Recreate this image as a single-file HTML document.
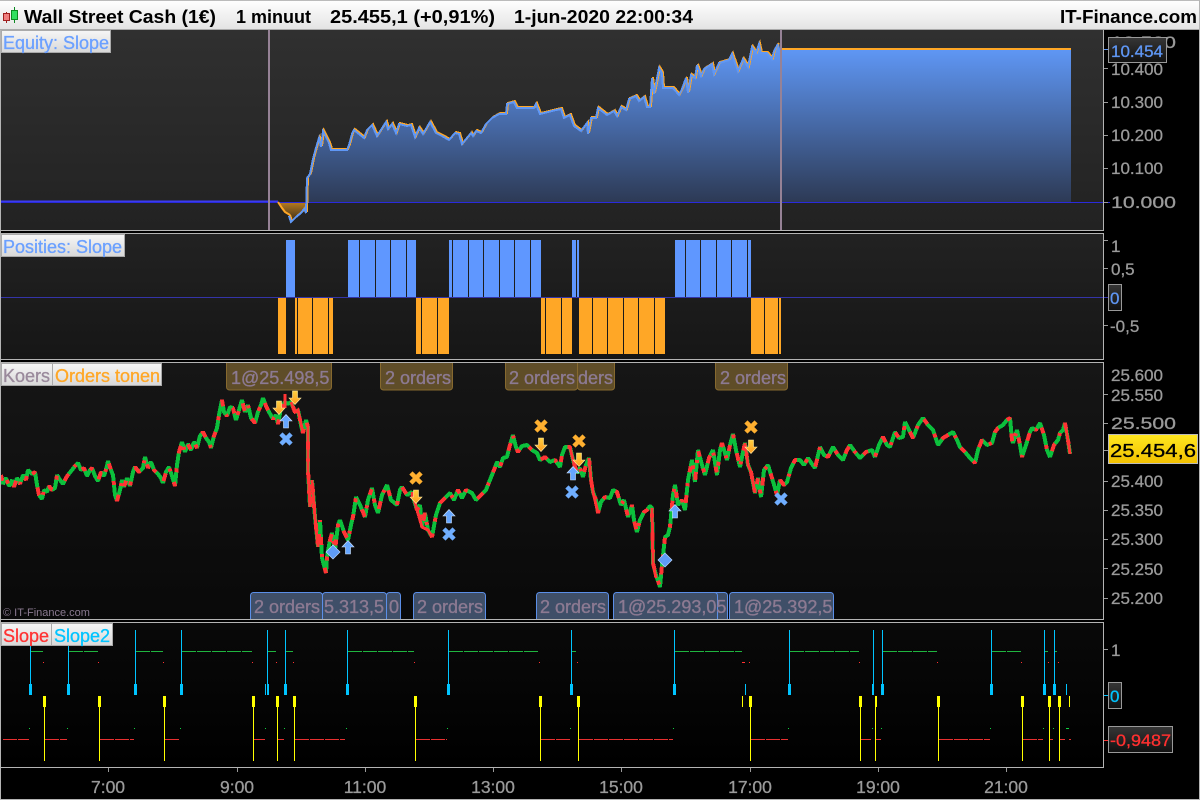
<!DOCTYPE html>
<html><head><meta charset="utf-8"><title>Wall Street Cash</title>
<style>
html,body{margin:0;padding:0;background:#000;width:1200px;height:800px;overflow:hidden}
svg{display:block}
text{font-family:"Liberation Sans",sans-serif;font-size:17px}
.h{font-size:18.5px;font-weight:bold;fill:#000}
.a{fill:#9a9a9a;stroke:#9a9a9a;stroke-width:.3}
.t{font-size:17.5px}
.o{font-size:18px;fill:#8c7a92;stroke:#8c7a92;stroke-width:.35}
.l{font-size:18px;stroke-width:.3}
.v{stroke-width:.3}
</style></head><body>
<svg width="1200" height="800" viewBox="0 0 1200 800" xmlns="http://www.w3.org/2000/svg">
<defs>
<linearGradient id="top" x1="0" y1="0" x2="0" y2="1"><stop offset="0" stop-color="#fff"/><stop offset="1" stop-color="#e4e4e4"/></linearGradient>
<linearGradient id="lab" x1="0" y1="0" x2="0" y2="1"><stop offset="0" stop-color="#f6f6f6"/><stop offset="1" stop-color="#d8d8d8"/></linearGradient>
<linearGradient id="p1" x1="0" y1="0" x2="0" y2="1"><stop offset="0" stop-color="#303030"/><stop offset="1" stop-color="#222"/></linearGradient>
<linearGradient id="p2" x1="0" y1="0" x2="0" y2="1"><stop offset="0" stop-color="#222"/><stop offset="1" stop-color="#161616"/></linearGradient>
<linearGradient id="p3" x1="0" y1="0" x2="0" y2="1"><stop offset="0" stop-color="#161616"/><stop offset="1" stop-color="#090909"/></linearGradient>
<linearGradient id="p4" x1="0" y1="0" x2="0" y2="1"><stop offset="0" stop-color="#090909"/><stop offset="1" stop-color="#000"/></linearGradient>
<linearGradient id="eq" gradientUnits="userSpaceOnUse" x1="0" y1="49" x2="0" y2="202"><stop offset="0" stop-color="#5f97f5"/><stop offset="1" stop-color="#2d3a55"/></linearGradient>
<linearGradient id="eqo" gradientUnits="userSpaceOnUse" x1="0" y1="202" x2="0" y2="221"><stop offset="0" stop-color="#b87c20"/><stop offset="1" stop-color="#3a2c18"/></linearGradient>
<linearGradient id="box" x1="0" y1="0" x2="0" y2="1"><stop offset="0" stop-color="#363636"/><stop offset="1" stop-color="#111"/></linearGradient>
<linearGradient id="yel" x1="0" y1="0" x2="0" y2="1"><stop offset="0" stop-color="#ffe820"/><stop offset="1" stop-color="#f2c000"/></linearGradient>
<linearGradient id="dn" x1="0" y1="0" x2="0" y2="1"><stop offset="0" stop-color="#ffd040"/><stop offset="1" stop-color="#ff9c20"/></linearGradient>
<path id="da" d="M-2.500-7H2.500V0H6L0 6.500-6 0H-2.500Z" fill="url(#dn)" stroke="#ffe9a0" stroke-width=".6"/>
<path id="ua" d="M-2.500 7H2.500V0H6L0-6.500-6 0H-2.500Z" fill="#66a6ff" stroke="#cfe4ff" stroke-width=".6"/>
<path id="xo" d="M-3.500-3.500L3.500 3.500M3.500-3.500L-3.500 3.500" stroke="#ffb030" stroke-width="4.500" stroke-linecap="square" fill="none"/>
<path id="xb" d="M-3.500-3.500L3.500 3.500M3.500-3.500L-3.500 3.500" stroke="#70aeff" stroke-width="4.500" stroke-linecap="square" fill="none"/>
<path id="dm" d="M0-7L7 0 0 7-7 0Z" fill="#5f9cf7" stroke="#bcd8ff" stroke-width=".7"/>
<polyline id="eline" fill="none" shape-rendering="crispEdges" points="290,215 292,221 297,216 302,212 305,208 307,212 308,177 311,173 314,158 317,147 320,137 322,146 324,130 330,142 332,149 348,149 350,144 353,133 355,129 365,137 368,129 373,124 378,135 387,121 389,128 393,123 397,132 400,123 408,125 412,124 416,136 420,127 424,133 431,121 437,132 443,135 450,139 456,132 460,133 463,143 472,132 474,135 477,130 482,132 487,123 493,117 500,113 507,113 508,103 515,101 518,107 535,107 537,103 541,113 557,109 562,108 565,117 571,114 575,125 582,130 588,122 589,133 592,117 597,117 599,107 608,114 615,110 618,115 622,106 627,109 630,98 637,95 640,100 645,96 648,106 651,106 653,77 655,93 660,67 663,72 664,87 674,87 680,94 683,88 687,77 689,92 692,74 696,77 698,64 702,75 705,68 713,63 715,73 720,62 730,59 733,53 739,70 744,58 749,66 753,46 757,52 760,43 762,52 768,52 773,58 775,50 779,43"/>
<polyline id="pline" fill="none" stroke-linejoin="bevel" shape-rendering="crispEdges" points="1,475 3,484 6,478 9,486 12,480 14,487 17,478 20,484 23,475 26,480 28,470 32,474 35,472 37,485 39,495 42,499 44,490 47,492 49,486 52,490 55,488 57,475 60,480 63,484 66,478 68,475 72,470 75,466 78,463 81,470 84,468 87,476 90,470 92,468 95,476 98,481 101,472 104,476 107,466 108,461 111,470 113,475 115,495 117,501 120,490 122,480 124,487 127,478 130,486 133,472 135,467 139,472 143,468 145,457 148,468 151,462 154,470 158,474 161,478 163,483 166,472 169,467 172,476 175,486 177,465 179,452 182,442 185,452 188,444 191,450 194,442 197,448 200,436 203,432 206,438 209,442 211,448 214,436 217,428 219,415 222,400 224,412 227,416 230,407 233,408 236,420 239,410 242,400 245,412 248,405 251,418 255,423 258,412 261,405 263,398 266,406 269,412 273,419 276,415 278,424 281,408 285,402 288,404 291,402 295,412 298,410 301,425 303,433 306,420 308,427 308,470 310,507 312,480 315,517 318,547 320,520 322,558 326,573 327,557 330,540 332,533 335,550 338,525 340,520 344,532 348,540 351,525 353,517 356,497 360,505 365,517 368,500 372,488 375,505 378,513 382,495 387,485 391,500 397,505 400,490 402,487 407,495 412,492 414,500 417,510 420,505 422,527 425,513 428,530 432,537 436,515 440,503 445,498 450,493 454,500 458,490 462,498 466,490 472,493 476,500 481,495 486,490 490,480 494,470 497,462 500,467 503,458 507,457 510,445 513,435 516,447 518,452 522,446 527,445 532,450 537,453 540,460 545,457 550,462 555,460 560,467 562,455 565,447 570,447 573,460 577,473 580,468 583,477 586,465 589,458 591,480 593,492 596,500 598,513 601,502 605,497 610,498 613,490 617,492 621,505 624,500 628,517 632,505 634,520 637,532 640,520 644,512 647,510 650,506 652,508 653,563 656,575 660,587 662,565 665,537 668,535 670,527 673,495 675,485 678,505 682,500 685,510 688,480 692,460 695,482 698,450 702,465 705,475 709,458 713,450 717,475 720,450 722,443 727,460 730,445 733,434 736,450 740,467 743,452 745,443 748,465 751,472 755,493 758,478 761,497 764,470 768,465 772,478 777,495 780,480 784,485 787,482 791,468 795,460 800,460 804,465 808,458 812,464 815,468 820,447 824,455 828,457 833,447 838,455 843,460 847,450 850,445 855,452 860,458 866,452 872,450 875,457 879,445 883,437 887,445 890,447 895,432 899,438 903,437 905,422 909,430 913,438 918,425 923,418 928,425 933,430 938,445 943,438 948,435 953,432 957,440 960,447 965,452 970,458 975,463 978,450 982,440 987,445 992,443 995,432 998,428 1003,425 1007,420 1010,418 1012,440 1013,443 1017,430 1020,445 1022,457 1026,445 1030,432 1032,428 1036,430 1040,423 1044,435 1047,450 1050,457 1054,445 1058,440 1060,433 1063,430 1065,423 1068,440 1070,454"/>
</defs>

<rect width="1200" height="800" fill="#000"/>
<!-- header -->
<rect x="0" y="0" width="1200" height="29" fill="url(#top)"/>
<rect x="0" y="0" width="1200" height="1" fill="#bbb"/>
<rect x="0" y="29" width="1200" height="1" fill="#aaa"/>
<path d="M6.500 12V23" stroke="#a02020"/><rect x="3.500" y="13.500" width="6" height="7" fill="#f08080" stroke="#a02020"/>
<path d="M14.500 7V23" stroke="#0a8a20"/><rect x="11.500" y="10.500" width="6" height="9" fill="#30e060" stroke="#0a8a20"/>
<text class="h" x="24" y="23" textLength="192" lengthAdjust="spacingAndGlyphs">Wall Street Cash (1€)</text>
<text class="h" x="236" y="23" textLength="75" lengthAdjust="spacingAndGlyphs">1 minuut</text>
<text class="h" x="330" y="23" textLength="165" lengthAdjust="spacingAndGlyphs">25.455,1 (+0,91%)</text>
<text class="h" x="514" y="23" textLength="179" lengthAdjust="spacingAndGlyphs">1-jun-2020 22:00:34</text>
<text class="h" x="1060" y="23" textLength="137" lengthAdjust="spacingAndGlyphs">IT-Finance.com</text>

<!-- panel backgrounds -->
<rect x="1" y="30" width="1102" height="200" fill="url(#p1)"/>
<rect x="1" y="234" width="1102" height="125" fill="url(#p2)"/>
<rect x="1" y="363" width="1102" height="256" fill="url(#p3)"/>
<rect x="1" y="623" width="1102" height="144" fill="url(#p4)"/>

<!-- equity -->
<polygon fill="url(#eq)" points="307,202 308,177 311,173 314,158 317,147 320,137 322,146 324,130 330,142 332,149 348,149 350,144 353,133 355,129 365,137 368,129 373,124 378,135 387,121 389,128 393,123 397,132 400,123 408,125 412,124 416,136 420,127 424,133 431,121 437,132 443,135 450,139 456,132 460,133 463,143 472,132 474,135 477,130 482,132 487,123 493,117 500,113 507,113 508,103 515,101 518,107 535,107 537,103 541,113 557,109 562,108 565,117 571,114 575,125 582,130 588,122 589,133 592,117 597,117 599,107 608,114 615,110 618,115 622,106 627,109 630,98 637,95 640,100 645,96 648,106 651,106 653,77 655,93 660,67 663,72 664,87 674,87 680,94 683,88 687,77 689,92 692,74 696,77 698,64 702,75 705,68 713,63 715,73 720,62 730,59 733,53 739,70 744,58 749,66 753,46 757,52 760,43 762,52 768,52 773,58 775,50 779,43 780,49 1071,49 1071,202"/>
<polygon fill="url(#eqo)" points="278,202 282,208 285,212 290,215 292,221 297,216 302,212 305,208 307,212 307,202"/>
<path d="M1 201.500H278" stroke="#3c3cf0" stroke-width="2"/>
<path d="M1 202.500H1110" stroke="#2a2adc" stroke-width="1"/>
<use href="#eline" stroke="#ffa726" stroke-width="2"/>
<polyline fill="none" stroke="#ffa726" stroke-width="2" points="278,202 282,208 285,212 290,215"/>
<use href="#eline" transform="translate(-1 1)" stroke="#5f97f5" stroke-width="2"/>
<rect x="781" y="48" width="290" height="2" fill="#ffa726"/>
<rect x="268" y="30" width="2" height="200" fill="#968296"/>
<rect x="780" y="30" width="2" height="200" fill="#968296"/>

<!-- positions -->
<g fill="#5f97ff">
<rect x="286" y="240" width="9" height="57"/><rect x="348" y="240" width="11" height="57"/><rect x="360" y="240" width="15" height="57"/><rect x="376" y="240" width="14" height="57"/><rect x="391" y="240" width="15" height="57"/><rect x="407" y="240" width="9" height="57"/>
<rect x="449" y="240" width="3" height="57"/><rect x="453" y="240" width="15" height="57"/><rect x="469" y="240" width="14" height="57"/><rect x="484" y="240" width="15" height="57"/><rect x="500" y="240" width="14" height="57"/><rect x="515" y="240" width="15" height="57"/><rect x="531" y="240" width="10" height="57"/>
<rect x="572" y="240" width="4" height="57"/><rect x="577" y="240" width="2" height="57"/>
<rect x="675" y="240" width="10" height="57"/><rect x="686" y="240" width="14" height="57"/><rect x="701" y="240" width="15" height="57"/><rect x="717" y="240" width="14" height="57"/><rect x="732" y="240" width="15" height="57"/><rect x="748" y="240" width="3" height="57"/>
</g>
<g fill="#ffa726">
<rect x="278" y="298" width="4" height="56"/><rect x="282" y="298" width="4" height="56"/><rect x="295" y="298" width="2" height="56"/><rect x="298" y="298" width="14" height="56"/><rect x="313" y="298" width="15" height="56"/><rect x="329" y="298" width="4" height="56"/>
<rect x="416" y="298" width="5" height="56"/><rect x="422" y="298" width="15" height="56"/><rect x="438" y="298" width="11" height="56"/>
<rect x="541" y="298" width="4" height="56"/><rect x="546" y="298" width="15" height="56"/><rect x="562" y="298" width="10" height="56"/>
<rect x="579" y="298" width="13" height="56"/><rect x="593" y="298" width="14" height="56"/><rect x="608" y="298" width="15" height="56"/><rect x="624" y="298" width="14" height="56"/><rect x="639" y="298" width="15" height="56"/><rect x="655" y="298" width="10" height="56"/>
<rect x="751" y="298" width="13" height="56"/><rect x="765" y="298" width="13" height="56"/><rect x="779" y="298" width="2" height="56"/>
</g>
<path d="M1 297.500H1108" stroke="#3434a8" stroke-width="1"/>

<!-- price -->
<use href="#pline" stroke="#0cc03c" stroke-width="4"/>
<use href="#pline" stroke="#ff3434" stroke-width="4" stroke-dasharray="6 12 4 15 8 9 3 11"/>
<g stroke="#ff3434" stroke-width="3" fill="none" shape-rendering="crispEdges">
<polyline points="285,394 285,408"/>
<polyline points="291,402 295,412 298,410 303,433"/>
<polyline points="308,425 308,470 310,507"/>
<polyline points="312,480 315,517 318,547"/>
<polyline points="412,492 417,510 422,527 428,530 432,537"/>
<polyline points="570,447 573,460 577,473"/>
<polyline points="589,458 591,480 593,492 598,513"/>
<polyline points="652,508 653,563 656,578"/>
<polyline points="745,443 748,465 751,472 755,493"/>
<polyline points="1065,423 1068,440 1070,454"/>
</g>

<!-- markers -->
<use href="#da" x="279" y="408"/><use href="#da" x="295" y="398"/><use href="#da" x="416" y="497"/><use href="#da" x="541" y="445"/><use href="#da" x="579" y="460"/><use href="#da" x="751" y="447"/>
<use href="#ua" x="286" y="421"/><use href="#ua" x="348" y="547"/><use href="#ua" x="449" y="516"/><use href="#ua" x="573" y="473"/><use href="#ua" x="675" y="511"/>
<use href="#xo" x="416" y="478"/><use href="#xo" x="541" y="426"/><use href="#xo" x="579" y="441"/><use href="#xo" x="751" y="427"/>
<use href="#xb" x="286" y="439"/><use href="#xb" x="449" y="534"/><use href="#xb" x="572" y="492"/><use href="#xb" x="781" y="499"/>
<use href="#dm" x="333" y="552"/><use href="#dm" x="665" y="560"/>

<!-- order labels, top -->
<g fill="#5f4d28" stroke="#86692f">
<rect x="226.500" y="360" width="105" height="30" rx="3"/>
<rect x="380.500" y="360" width="72" height="30" rx="3"/>
<rect x="577.500" y="360" width="37" height="30" rx="3"/>
<rect x="505.500" y="360" width="72" height="30" rx="3"/>
<rect x="715.500" y="360" width="72" height="30" rx="3"/>
</g>
<rect x="1" y="359" width="1102" height="4" fill="#000"/>
<text class="o" x="231" y="384">1@25.498,5</text>
<text class="o" x="385" y="384">2 orders</text>
<text class="o" x="509" y="384">2 orders</text>
<text class="o" x="578" y="384">ders</text>
<text class="o" x="720" y="384">2 orders</text>

<!-- order labels, bottom -->
<g fill="#3f4f68" stroke="#5b8fe8">
<rect x="386.500" y="592.500" width="14" height="30" rx="3"/>
<rect x="322.500" y="592.500" width="64" height="30" rx="3"/>
<rect x="250.500" y="592.500" width="72" height="30" rx="3"/>
<rect x="413.500" y="592.500" width="72" height="30" rx="3"/>
<rect x="536.500" y="592.500" width="72" height="30" rx="3"/>
<rect x="700.500" y="592.500" width="27" height="30" rx="3"/>
<rect x="613.500" y="592.500" width="104" height="30" rx="3"/>
<rect x="729.500" y="592.500" width="104" height="30" rx="3"/>
</g>
<text class="o" x="254" y="613">2 orders</text>
<text class="o" x="324" y="613">5.313,5</text>
<text class="o" x="389" y="613">0</text>
<text class="o" x="417" y="613">2 orders</text>
<text class="o" x="540" y="613">2 orders</text>
<text class="o" x="618" y="613">1@25.293,05</text>
<text class="o" x="734" y="613">1@25.392,5</text>
<text x="3" y="616" style="font-size:11px" fill="#8a7a90">© IT-Finance.com</text>
<rect x="1" y="620" width="1102" height="3" fill="#000"/>

<!-- slope panel -->
<g fill="#00c4ff">
<rect x="29" y="684" width="3" height="11"/><rect x="67" y="684" width="3" height="11"/><rect x="134" y="684" width="3" height="11"/><rect x="180" y="684" width="3" height="11"/><rect x="265" y="684" width="1" height="11"/><rect x="267" y="684" width="2" height="11"/><rect x="284" y="684" width="3" height="11"/><rect x="346" y="684" width="3" height="11"/><rect x="447" y="684" width="3" height="11"/><rect x="570" y="684" width="3" height="11"/><rect x="673" y="684" width="3" height="11"/><rect x="745" y="684" width="1" height="11"/><rect x="788" y="684" width="3" height="11"/><rect x="872" y="684" width="2" height="11"/><rect x="881" y="684" width="3" height="11"/><rect x="990" y="684" width="3" height="11"/><rect x="1043" y="684" width="3" height="11"/><rect x="1053" y="684" width="3" height="11"/><rect x="1066" y="684" width="1" height="11"/>
<rect x="30" y="630" width="1" height="55"/><rect x="68" y="630" width="1" height="55"/><rect x="135" y="630" width="1" height="55"/><rect x="181" y="630" width="1" height="55"/><rect x="267" y="630" width="1" height="55"/><rect x="285" y="630" width="1" height="55"/><rect x="347" y="630" width="1" height="55"/><rect x="448" y="630" width="1" height="55"/><rect x="571" y="630" width="1" height="55"/><rect x="674" y="630" width="1" height="55"/><rect x="789" y="630" width="1" height="55"/><rect x="873" y="630" width="1" height="55"/><rect x="882" y="630" width="1" height="55"/><rect x="991" y="630" width="1" height="55"/><rect x="1044" y="630" width="1" height="55"/><rect x="1054" y="630" width="1" height="55"/>
</g>
<g fill="#ffff00">
<rect x="43" y="696" width="3" height="11"/><rect x="98" y="696" width="3" height="11"/><rect x="163" y="696" width="3" height="11"/><rect x="252" y="696" width="3" height="11"/><rect x="276" y="696" width="3" height="11"/><rect x="293" y="696" width="3" height="11"/><rect x="414" y="696" width="3" height="11"/><rect x="539" y="696" width="3" height="11"/><rect x="577" y="696" width="3" height="11"/><rect x="742" y="696" width="1" height="11"/><rect x="749" y="696" width="3" height="11"/><rect x="859" y="696" width="3" height="11"/><rect x="875" y="696" width="2" height="11"/><rect x="937" y="696" width="3" height="11"/><rect x="1021" y="696" width="3" height="11"/><rect x="1048" y="696" width="3" height="11"/><rect x="1058" y="696" width="3" height="11"/><rect x="1069" y="696" width="1" height="11"/>
<rect x="44" y="706" width="1" height="55"/><rect x="99" y="706" width="1" height="55"/><rect x="164" y="706" width="1" height="55"/><rect x="253" y="706" width="1" height="55"/><rect x="277" y="706" width="1" height="55"/><rect x="294" y="706" width="1" height="55"/><rect x="415" y="706" width="1" height="55"/><rect x="540" y="706" width="1" height="55"/><rect x="578" y="706" width="1" height="55"/><rect x="750" y="706" width="1" height="55"/><rect x="860" y="706" width="1" height="55"/><rect x="875" y="706" width="1" height="55"/><rect x="938" y="706" width="1" height="55"/><rect x="1022" y="706" width="1" height="55"/><rect x="1049" y="706" width="1" height="55"/><rect x="1059" y="706" width="1" height="55"/>
</g>
<path d="M31 651.500H43M69 651.500H98M136 651.500H163M182 651.500H252M268 651.500H276M286 651.500H293M348 651.500H414M449 651.500H539M572 651.500H576M675 651.500H742M790 651.500H859M883 651.500H937M992 651.500H1021M1045 651.500H1048M1055 651.500H1057" stroke="#1fb53f" stroke-dasharray="14 1"/>
<path d="M3 739.500H29M45 739.500H67M100 739.500H134M165 739.500H180M254 739.500H265M278 739.500H284M295 739.500H345M416 739.500H447M541 739.500H570M579 739.500H673M751 739.500H788M861 739.500H871M876 739.500H881M939 739.500H990M1023 739.500H1043M1050 739.500H1053M1060 739.500H1065M1069 739.500H1071" stroke="#e83030" stroke-dasharray="14 1"/>
<path d="M43 662.500h1M98 662.500h1M163 662.500h1M252 662.500h1M276 662.500h1M293 662.500h1M414 662.500h1M539 662.500h1M577 662.500h1M742 662.500h3M749 662.500h1M859 662.500h1M937 662.500h1M1021 662.500h1M1048 662.500h1M1058 662.500h1" stroke="#ff3030"/>
<path d="M29 728.500h1M67 728.500h1M134 728.500h1M180 728.500h1M265 728.500h1M284 728.500h1M346 728.500h1M447 728.500h1M570 728.500h1M673 728.500h1M788 728.500h1M872 728.500h1M881 728.500h1M990 728.500h1M1043 728.500h1M1053 728.500h1M1066 728.500h3" stroke="#10d040"/>

<!-- frames -->
<g fill="none" stroke="#b4b4b4">
<path d="M.5 30V799.500H1199.500V0"/>
<path d="M0 230.500H1103.500V30"/>
<path d="M0 233.500H1103.500V359.500H0"/>
<path d="M0 362.500H1103.500V619.500H0"/>
<path d="M0 622.500H1103.500V767.500H0"/>
</g>

<!-- ticks -->
<path d="M1104 68.500h4M1104 102.500h4M1104 135.500h4M1104 168.500h4M1104 202.500h4M1104 240.500h4M1104 268.500h4M1104 325.500h4M1104 394.500h4M1104 423.500h4M1104 450.500h4M1104 481.500h4M1104 510.500h4M1104 539.500h4M1104 568.500h4M1104 598.500h4M1104 649.500h4" stroke="#999"/>
<path d="M1104 49.500h4" stroke="#5f97f5"/><path d="M1104 695.500h4" stroke="#00c4ff"/><path d="M1104 740.500h4" stroke="#ff3030"/>
<path d="M108.500 768v4M237.500 768v4M365.500 768v4M493.500 768v4M621.500 768v4M750.500 768v4M878.500 768v4M1006.500 768v4" stroke="#999"/>

<!-- axis text -->
<text class="a" x="1111" y="48" textLength="65" lengthAdjust="spacingAndGlyphs">10.500</text>
<text class="a" x="1111" y="75">10.400</text>
<text class="a" x="1111" y="108">10.300</text>
<text class="a" x="1111" y="141">10.200</text>
<text class="a" x="1111" y="174">10.100</text>
<text class="a" x="1111" y="208" textLength="65" lengthAdjust="spacingAndGlyphs">10.000</text>
<text class="a" x="1111" y="252">1</text>
<text class="a" x="1111" y="275">0,5</text>
<text class="a" x="1110" y="332">-0,5</text>
<text class="a" x="1111" y="381">25.600</text>
<text class="a" x="1111" y="401">25.550</text>
<text class="a" x="1111" y="429" textLength="65" lengthAdjust="spacingAndGlyphs">25.500</text>
<text class="a" x="1111" y="487">25.400</text>
<text class="a" x="1111" y="516">25.350</text>
<text class="a" x="1111" y="545">25.300</text>
<text class="a" x="1111" y="575">25.250</text>
<text class="a" x="1111" y="604">25.200</text>
<text class="a" x="1111" y="656">1</text>

<rect x="1108.500" y="37.500" width="58" height="25" fill="url(#box)" stroke="#999"/>
<text class="v" x="1111" y="57" fill="#5f97f5" stroke="#5f97f5">10.454</text>
<rect x="1108.500" y="284.500" width="13" height="26" fill="url(#box)" stroke="#999"/>
<text class="v" x="1110" y="304" fill="#5f97f5" stroke="#5f97f5">0</text>
<rect x="1108.500" y="434.500" width="89" height="29" fill="url(#yel)" stroke="#bbb"/>
<text class="v" x="1110" y="457" fill="#000" stroke="#000" textLength="86" lengthAdjust="spacingAndGlyphs" style="font-size:18px">25.454,6</text>
<rect x="1108.500" y="682.500" width="13" height="26" fill="url(#box)" stroke="#999"/>
<text class="v" x="1110" y="702" fill="#00c4ff" stroke="#00c4ff">0</text>
<rect x="1108.500" y="726.500" width="64" height="26" fill="url(#box)" stroke="#999"/>
<text class="v" x="1110" y="746" fill="#ff3030" stroke="#ff3030" textLength="61" lengthAdjust="spacingAndGlyphs">-0,9487</text>

<!-- time axis -->
<g text-anchor="middle">
<text class="a t" x="108" y="793">7:00</text>
<text class="a t" x="237" y="793">9:00</text>
<text class="a t" x="365" y="793">11:00</text>
<text class="a t" x="493" y="793">13:00</text>
<text class="a t" x="621" y="793">15:00</text>
<text class="a t" x="750" y="793">17:00</text>
<text class="a t" x="878" y="793">19:00</text>
<text class="a t" x="1006" y="793">21:00</text>
</g>

<!-- panel labels -->
<g stroke="#aaa">
<rect x="1.500" y="30.500" width="109" height="22" fill="url(#lab)"/>
<rect x="1.500" y="234.500" width="123" height="22" fill="url(#lab)"/>
<rect x="1.500" y="363.500" width="51" height="22" fill="url(#lab)"/>
<rect x="52.500" y="363.500" width="109" height="22" fill="url(#lab)"/>
<rect x="1.500" y="623.500" width="50" height="22" fill="url(#lab)"/>
<rect x="51.500" y="623.500" width="61" height="22" fill="url(#lab)"/>
</g>
<text class="l" x="3" y="49" fill="#6ba0ff" stroke="#6ba0ff">Equity: Slope</text>
<text class="l" x="3" y="253" fill="#6ba0ff" stroke="#6ba0ff">Posities: Slope</text>
<text class="l" x="3" y="382" fill="#9a8a9c" stroke="#9a8a9c">Koers</text>
<text class="l" x="55" y="382" fill="#ffa726" stroke="#ffa726">Orders tonen</text>
<text class="l" x="3" y="642" fill="#ff3333" stroke="#ff3333">Slope</text>
<text class="l" x="54" y="642" fill="#00c4ff" stroke="#00c4ff">Slope2</text>
</svg>
</body></html>
